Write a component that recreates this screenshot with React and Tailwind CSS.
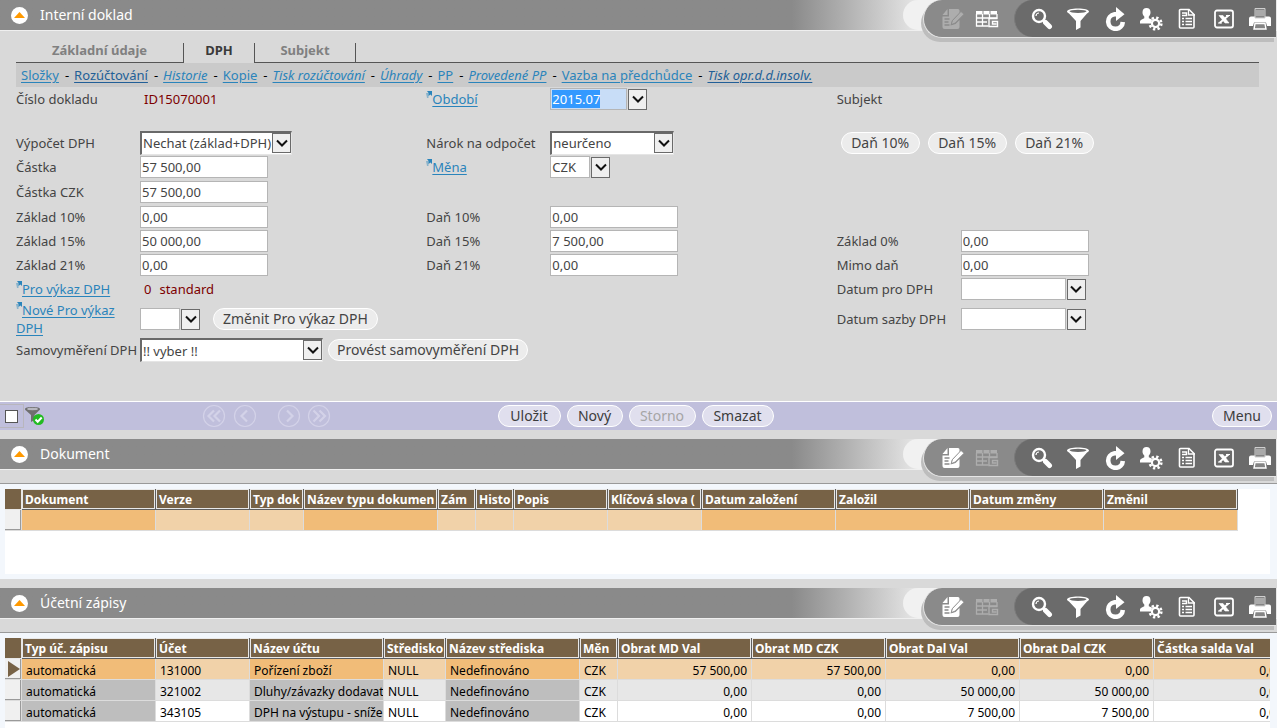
import { useEffect, useRef } from "react";

const documentColumns = [
  { title: "Dokument", width: 134, dark: true },
  { title: "Verze", width: 94 },
  { title: "Typ dok", width: 54 },
  { title: "Název typu dokumen", width: 134, dark: true },
  { title: "Zám", width: 38 },
  { title: "Histo", width: 38 },
  { title: "Popis", width: 94 },
  { title: "Klíčová slova (", width: 94 },
  { title: "Datum založení", width: 134, dark: true },
  { title: "Založil", width: 134, dark: true },
  { title: "Datum změny", width: 134, dark: true },
  { title: "Změnil", width: 134, dark: true },
];

const entryColumns = [
  { title: "Typ úč. zápisu", width: 134, dark: true },
  { title: "Účet", width: 94 },
  { title: "Název účtu", width: 134, dark: true },
  { title: "Středisko", width: 62 },
  { title: "Název střediska", width: 134, dark: true },
  { title: "Měn", width: 38 },
  { title: "Obrat MD Val", width: 134, right: true },
  { title: "Obrat MD CZK", width: 134, right: true },
  { title: "Obrat Dal Val", width: 134, right: true },
  { title: "Obrat Dal CZK", width: 134, right: true },
  { title: "Částka salda Val", width: 134, right: true },
];

const entries = [
  ["automatická", "131000", "Pořízení zboží", "NULL", "Nedefinováno", "CZK", "57 500,00", "57 500,00", "0,00", "0,00", "0,00"],
  ["automatická", "321002", "Dluhy/závazky dodavat", "NULL", "Nedefinováno", "CZK", "0,00", "0,00", "50 000,00", "50 000,00", "0,00"],
  ["automatická", "343105", "DPH na výstupu - sníže", "NULL", "Nedefinováno", "CZK", "0,00", "0,00", "7 500,00", "7 500,00", "0,00"],
];

const links = [
  { text: "Složky" },
  { text: "Rozúčtování", visited: true },
  { text: "Historie", italic: true },
  { text: "Kopie" },
  { text: "Tisk rozúčtování", italic: true },
  { text: "Úhrady", italic: true },
  { text: "PP" },
  { text: "Provedené PP", italic: true },
  { text: "Vazba na předchůdce" },
  { text: "Tisk opr.d.d.insolv.", italic: true, visited: true },
];

/* ---------- icons ---------- */

function EditIcon() {
  return (
    <svg viewBox="0 0 22 22" width="22" height="22" fill="currentColor">
      <path d="M7 1h9a1.500 1.500 0 0 1 1.500 1.500V5L10 12.500l-1.500 5L13.500 16l4-4v7a2 2 0 0 1-2 2h-13a2 2 0 0 1-2-2V8.500H7z" />
      <path d="M5.500 1v6H.5z" />
      <path d="M2.500 11h5M2.500 14h4M2.500 17h5" stroke="#8a8a8a" strokeWidth="1.300" />
      <path d="M19 3.500l3 2.700-8.800 8.800-4 1.500 1.300-4z" stroke="#8a8a8a" strokeWidth=".8" />
    </svg>
  );
}

function GridIcon() {
  return (
    <svg viewBox="0 0 24 18" width="24" height="18" fill="none" stroke="currentColor">
      <path d="M1 1h6.500v3.500H1zM8.500 1h6v3.500h-6zM15.500 1h6.500v3.500h-6.500z" fill="currentColor" stroke="none" />
      <path d="M1.500 4v12h12M1 8h21.500M1 12h11M7.500 4v12M14.500 4v4M22 4v4" strokeWidth="1.300" />
      <path d="M22.500 8.500H14v8h8.500v-5h-5v2.500h4" strokeWidth="1.400" />
    </svg>
  );
}

function SearchIcon() {
  return (
    <svg viewBox="0 0 22 22" width="22" height="22" fill="none" stroke="currentColor">
      <circle cx="8" cy="8" r="6" strokeWidth="2.400" />
      <path d="M5 8a3 3 0 0 1 3-3" strokeWidth="1.200" />
      <path d="M12.500 12.500l1.500 1.500" strokeWidth="2.500" />
      <path d="M14.500 14.500l4 4" strokeWidth="5" strokeLinecap="round" />
    </svg>
  );
}

function FilterIcon() {
  return (
    <svg viewBox="0 0 22 22" width="22" height="22" fill="currentColor">
      <path d="M0 3.500C0 1.800 5 .5 11 .5s11 1.300 11 3c0 .8-.8 1.500-2 2L13.500 13v6.500L9 22v-9L2 5.500c-1.200-.5-2-1.200-2-2z" />
      <ellipse cx="11" cy="3.300" rx="8.500" ry="1.600" fill="#6b6b6b" />
    </svg>
  );
}

function RefreshIcon() {
  return (
    <svg viewBox="0 0 22 24" width="22" height="24">
      <path d="M13 7.300h-2.500a7.300 7.300 0 1 0 8.300 7.700" fill="none" stroke="currentColor" strokeWidth="4.600" />
      <path d="M12 0l8.500 7.300L12 14z" fill="currentColor" />
    </svg>
  );
}

function UserGearIcon() {
  return (
    <svg viewBox="0 0 24 24" width="24" height="24">
      <path d="M7.500 1c2.600 0 4 1.600 4 4.200 0 2-.8 3.400-1.700 4.400v1.600l3.500 1.600-1.800 3.700H1v-1.800c0-1.200.6-1.800 1.800-2.300l2.500-1.200V9.600c-1-1-1.800-2.400-1.800-4.400C3.500 2.600 5 1 7.500 1z" fill="currentColor" />
      <circle cx="16.500" cy="16.500" r="5.800" fill="none" stroke="currentColor" strokeWidth="2.600" strokeDasharray="2.300 2.255" />
      <circle cx="16.500" cy="16.500" r="3.600" fill="#6b6b6b" stroke="currentColor" strokeWidth="2.200" />
    </svg>
  );
}

function ReportIcon() {
  return (
    <svg viewBox="0 0 18 22" width="18" height="22" fill="none" stroke="currentColor">
      <path d="M2.500 1.500H11l5 5v12.500a1 1 0 0 1-1 1h-12.500a1 1 0 0 1-1-1V2.500a1 1 0 0 1 1-1z" strokeWidth="1.600" />
      <path d="M10.500 1v6H17" strokeWidth="1.300" />
      <path d="M4 5h4.500v2.500H4M4 10.500h2M4 13.500h2M4 16.500h2M7.500 10.500H14M7.500 13.500H14M7.500 16.500H14" strokeWidth="1.500" />
    </svg>
  );
}

function ExcelIcon() {
  return (
    <svg viewBox="0 0 20 20" width="20" height="20" fill="none" stroke="currentColor">
      <rect x="1" y="1.500" width="18" height="17" rx="2" strokeWidth="1.800" />
      <path d="M5 6.500h4l6 7.500h-4z" fill="currentColor" strokeWidth=".6" />
      <path d="M14.500 6.500L5.500 14" strokeWidth="1.800" />
      <path d="M12 6.500h4M4 14h4" strokeWidth="1.200" />
    </svg>
  );
}

function PrinterIcon() {
  return (
    <svg viewBox="0 0 22 22" width="22" height="22">
      <path d="M2 8.500h18a2 2 0 0 1 2 2V18h-4l-1-3.500H5L4 18H0v-7.500a2 2 0 0 1 2-2z" fill="currentColor" />
      <path d="M6 .5h10v9.500H6z" fill="#858585" stroke="#cfcfcf" strokeWidth="1" />
      <path d="M7 3h8M7 5h8M7 7h8" stroke="#cfcfcf" strokeWidth="1" />
      <path d="M6 15.500h10l1 5.500H5z" fill="#858585" stroke="currentColor" strokeWidth="1.400" />
    </svg>
  );
}

function ChevronDown() {
  return (
    <svg viewBox="0 0 12 8" width="12" height="8" fill="none" stroke="#111" strokeWidth="2">
      <path d="M1 1.500l5 5 5-5" />
    </svg>
  );
}

function FilterOkIcon() {
  return (
    <svg viewBox="0 0 20 20" width="20" height="20">
      <path d="M0 3C0 1.700 3 1 7.500 1S15 1.700 15 3c0 .7-.4 1.200-1 1.500L9.500 9v5L6 16V9L1 4.500C.4 4.200 0 3.700 0 3z" fill="#6f6f6f" />
      <ellipse cx="7.500" cy="3" rx="5.500" ry="1.200" fill="#b8b8c0" />
      <circle cx="13.500" cy="13.500" r="5.500" fill="#22bb22" />
      <path d="M10.500 13.500l2.200 2.200 4-4.200" fill="none" stroke="#fff" strokeWidth="2" />
    </svg>
  );
}

function NavIcon({ d }) {
  return (
    <svg viewBox="0 0 24 24" width="24" height="24" fill="none" stroke="#d3d2e8">
      <circle cx="12" cy="12" r="10.500" strokeWidth="1.200" />
      <path d={d} strokeWidth="2.200" />
    </svg>
  );
}

/* ---------- small controls ---------- */

function PillButton({ children, tone = "bg-[#ececec]", className = "", ...rest }) {
  return (
    <button
      className={`h-[22px] rounded-full border border-white text-sm leading-[20px] whitespace-nowrap ${tone} ${className}`}
      {...rest}
    >
      {children}
    </button>
  );
}

function RefLink({ children }) {
  return (
    <a href="#" className="inline-block leading-[18px] text-[#2a84bb] underline underline-offset-2">
      <svg viewBox="0 0 6 8" width="6" height="8" className="inline-block align-super">
        <path d="M1 0h5v5L4.500 3.500 2.500 5V2z" fill="#2a84bb" />
        <path d="M0 2h2.500v5H1z" fill="#2a84bb" opacity=".45" />
      </svg>
      {children}
    </a>
  );
}

function Field({ id, label, children }) {
  return (
    <div className="flex min-w-0 items-center">
      <label htmlFor={id} className="w-[124px] shrink-0 whitespace-nowrap">
        {label}
      </label>
      {children}
    </div>
  );
}

function TextBox({ className = "w-32", ...rest }) {
  return (
    <input
      type="text"
      className={`h-[22px] border border-[#b5b5b5] bg-white px-px outline-none ${className}`}
      {...rest}
    />
  );
}

function Combo({ id, width, label, value = "" }) {
  return (
    <div className="flex items-center gap-px">
      <TextBox id={id} className={width} defaultValue={value} />
      <ArrowButton label={label} />
    </div>
  );
}

function ArrowButton({ label }) {
  return (
    <button
      aria-label={label}
      className="flex h-[21px] w-[19px] items-center justify-center border border-[#6a6a6a] bg-[#efefef]"
    >
      <ChevronDown />
    </button>
  );
}

function SelectBox({ id, value, className }) {
  return (
    <div className={`relative ${className}`}>
      <select
        id={id}
        className="block h-6 w-full appearance-none border-t-2 border-r border-b border-l-2 border-t-[#696969] border-r-[#e5e5e5] border-b-[#e5e5e5] border-l-[#696969] bg-white pl-px outline-none"
      >
        <option>{value}</option>
      </select>
      <span className="pointer-events-none absolute top-0.5 right-px flex h-5 w-[19px] items-center justify-center border border-[#6a6a6a] bg-[#efefef]">
        <ChevronDown />
      </span>
    </div>
  );
}

function PeriodBox() {
  const ref = useRef(null);

  useEffect(() => {
    ref.current.focus();
    ref.current.select();
  }, []);

  return (
    <div className="flex items-center gap-px">
      <input
        id="obdobi"
        ref={ref}
        type="text"
        defaultValue="2015.07"
        className="h-[22px] w-[77px] border border-[#b5b5b5] bg-[#c8ddf7] px-px outline-none selection:bg-[#3399ff] selection:text-white"
      />
      <ArrowButton label="Vybrat období" />
    </div>
  );
}

/* ---------- panels ---------- */

function ToolButton({ label, className = "w-6", children }) {
  return (
    <button aria-label={label} className={`flex h-full items-center justify-center ${className}`}>
      {children}
    </button>
  );
}

function PanelHeader({ title, editable }) {
  const dim = "w-[34px] text-[#adadad]";
  const lit = "w-[34px] text-white";

  return (
    <header className="relative flex h-[31px] shrink-0 items-center border-b border-[#efefef] bg-linear-to-r from-[#8a8a8a] from-62% to-[#e8e8e8] to-72% pl-[11px] text-white">
      <button aria-label="Sbalit" className="flex size-[17px] items-center justify-center rounded-full bg-white">
        <svg viewBox="0 0 11 6" width="11" height="6">
          <path d="M5.500 0L11 6H0z" fill="#f90" />
        </svg>
      </button>
      <h2 className="ml-3 text-sm">{title}</h2>

      {/* toolbar hangs below the title strip */}
      <div className="absolute top-0 right-0 flex pr-px">
        <div className="-mr-5 h-[30px] w-10 rounded-l-full bg-[#f1f1f1]" />
        <div className="relative flex h-[38px] rounded-l-[20px] border-b border-l border-[#e6e6e6] bg-[#8a8a8a] pl-3 shadow-[-2px_4px_0_#bdbdbd]">
          <ToolButton label="Upravit" className={editable ? lit : dim}><EditIcon /></ToolButton>
          <ToolButton label="Tabulka" className={editable ? dim : lit}><GridIcon /></ToolButton>
          <div className="ml-2.5 flex w-[262px] justify-between rounded-l-[20px] border-l border-[#7b7b7b] bg-[#6b6b6b] pr-1 pl-[15px]">
            <ToolButton label="Hledat"><SearchIcon /></ToolButton>
            <ToolButton label="Filtr"><FilterIcon /></ToolButton>
            <ToolButton label="Obnovit"><RefreshIcon /></ToolButton>
            <ToolButton label="Nastavení uživatele"><UserGearIcon /></ToolButton>
            <ToolButton label="Sestava"><ReportIcon /></ToolButton>
            <ToolButton label="Export do Excelu"><ExcelIcon /></ToolButton>
            <ToolButton label="Tisk"><PrinterIcon /></ToolButton>
          </div>
        </div>
      </div>
    </header>
  );
}

function rowColor(index, dark) {
  if (index === 0) return dark ? "bg-[#f1bc78]" : "bg-[#f1d2a9]";
  if (dark) return "bg-[#bebebe]";
  return index % 2 ? "bg-[#e7e7e7]" : "bg-white";
}

function DataGrid({ columns, rows, current }) {
  const total = columns.reduce((sum, c) => sum + c.width, 17);

  return (
    <table className="table-fixed border-separate border-spacing-0 text-xs text-black" style={{ width: total }}>
      <colgroup>
        <col style={{ width: 17 }} />
        {columns.map((c) => (
          <col key={c.title} style={{ width: c.width }} />
        ))}
      </colgroup>
      <thead>
        <tr className="h-[21px]">
          <th className="border-r border-b border-[#e8e8e8] bg-[#776246] p-0" />
          {columns.map((c) => (
            <th
              key={c.title}
              className="overflow-hidden border-r border-b border-[#5f5f5f] bg-[#776246] p-0 text-left font-bold whitespace-nowrap text-white"
            >
              <div className="h-5 overflow-hidden border border-[#e8e8e8] pl-0.5 leading-[19px]">{c.title}</div>
            </th>
          ))}
        </tr>
      </thead>
      <tbody>
        {rows.map((row, i) => (
          <tr key={i} className="h-[21px]">
            <td className="border-r border-b border-[#dcdcdc] p-0">
              <div className="flex h-5 items-center justify-end border-r border-b border-[#9a9a9a] bg-[#f0f0f0]">
                {current === i && (
                  <svg viewBox="0 0 12 16" width="12" height="16">
                    <path d="M0 0l12 8-12 8z" fill="#776246" />
                  </svg>
                )}
              </div>
            </td>
            {columns.map((c, j) => (
              <td
                key={c.title}
                className={`overflow-hidden border-r border-b border-[#dcdcdc] px-1 pt-1 pb-0 leading-4 whitespace-nowrap ${rowColor(i, c.dark)} ${c.right ? "text-right" : ""}`}
              >
                {row[j]}
              </td>
            ))}
          </tr>
        ))}
      </tbody>
    </table>
  );
}

function Tab({ active, className, children }) {
  return (
    <button
      role="tab"
      aria-selected={active}
      className={`border-r border-[#555] pb-1.5 leading-3 font-bold ${active ? "text-[#3a3a3a]" : "border-b text-[#808080]"} ${className}`}
    >
      {children}
    </button>
  );
}

function DocumentForm() {
  const row = "grid grid-cols-3 items-center";

  return (
    <div className="flex flex-col text-[#444]">
      <div className="mt-3 mr-[18px] ml-4 flex h-5" role="tablist">
        <Tab className="w-[168px]">Základní údaje</Tab>
        <Tab active className="w-[71px]">DPH</Tab>
        <Tab className="w-[101px]">Subjekt</Tab>
        <div className="flex-1 border-b border-[#555]" />
      </div>
      <nav className="mr-[18px] ml-4 flex h-6 items-center gap-1.5 bg-[#cacaca] pl-[5px] whitespace-nowrap text-black">
        {links.map((link, i) => (
          <span key={link.text} className="flex gap-[5px]">
            {i > 0 && <span>-</span>}
            <a
              href="#"
              className={`underline underline-offset-2 ${link.italic ? "italic" : ""} ${link.visited ? "text-[#225f97]" : "text-[#2a84bb]"}`}
            >
              {link.text}
            </a>
          </span>
        ))}
      </nav>

      <div className="pr-[30px] pl-4">
        <div className={`${row} h-6`}>
          <Field label="Číslo dokladu">
            <output className="pl-1 text-[#7d0000]">ID15070001</output>
          </Field>
          <Field id="obdobi" label={<RefLink>Období</RefLink>}>
            <PeriodBox />
          </Field>
          <span>Subjekt</span>
        </div>
        <div className={`${row} mt-[19px] h-[25px]`}>
          <Field id="vypocet" label="Výpočet DPH">
            <SelectBox id="vypocet" value="Nechat (základ+DPH)" className="w-[152px]" />
          </Field>
          <Field id="narok" label="Nárok na odpočet">
            <SelectBox id="narok" value="neurčeno" className="w-[124px]" />
          </Field>
          <div className="flex gap-2 pl-1">
            <PillButton className="w-[79px]">Daň 10%</PillButton>
            <PillButton className="w-[79px]">Daň 15%</PillButton>
            <PillButton className="w-[79px]">Daň 21%</PillButton>
          </div>
        </div>
        <div className={`${row} h-6`}>
          <Field id="castka" label="Částka">
            <TextBox id="castka" defaultValue="57 500,00" />
          </Field>
          <Field id="mena" label={<RefLink>Měna</RefLink>}>
            <Combo id="mena" width="w-10" label="Vybrat měnu" value="CZK" />
          </Field>
        </div>
        <div className={`${row} h-[25px]`}>
          <Field id="castka-czk" label="Částka CZK">
            <TextBox id="castka-czk" defaultValue="57 500,00" />
          </Field>
        </div>
        <div className={`${row} h-[25px]`}>
          <Field id="zaklad10" label="Základ 10%">
            <TextBox id="zaklad10" defaultValue="0,00" />
          </Field>
          <Field id="dan10" label="Daň 10%">
            <TextBox id="dan10" defaultValue="0,00" />
          </Field>
        </div>
        <div className={`${row} h-6`}>
          <Field id="zaklad15" label="Základ 15%">
            <TextBox id="zaklad15" defaultValue="50 000,00" />
          </Field>
          <Field id="dan15" label="Daň 15%">
            <TextBox id="dan15" defaultValue="7 500,00" />
          </Field>
          <Field id="zaklad0" label="Základ 0%">
            <TextBox id="zaklad0" defaultValue="0,00" />
          </Field>
        </div>
        <div className={`${row} h-6`}>
          <Field id="zaklad21" label="Základ 21%">
            <TextBox id="zaklad21" defaultValue="0,00" />
          </Field>
          <Field id="dan21" label="Daň 21%">
            <TextBox id="dan21" defaultValue="0,00" />
          </Field>
          <Field id="mimo-dan" label="Mimo daň">
            <TextBox id="mimo-dan" defaultValue="0,00" />
          </Field>
        </div>
        <div className={`${row} h-6`}>
          <Field label={<RefLink>Pro výkaz DPH</RefLink>}>
            <output className="flex gap-2 pl-1 text-[#7d0000]">
              <span>0</span>
              <span>standard</span>
            </output>
          </Field>
          <span />
          <Field id="datum-pro" label="Datum pro DPH">
            <Combo id="datum-pro" width="w-[105px]" label="Vybrat datum pro DPH" />
          </Field>
        </div>
        <div className={`${row} h-9`}>
          <Field
            id="novy-vykaz"
            label={<RefLink>Nové Pro výkaz<br />DPH</RefLink>}
          >
            <Combo id="novy-vykaz" width="w-10" label="Vybrat výkaz" />
            <PillButton className="ml-[13px] px-[9px]">Změnit Pro výkaz DPH</PillButton>
          </Field>
          <span />
          <Field id="datum-sazby" label="Datum sazby DPH">
            <Combo id="datum-sazby" width="w-[105px]" label="Vybrat datum sazby DPH" />
          </Field>
        </div>
        <div className={`${row} h-[26px]`}>
          <Field id="samovymereni" label="Samovyměření DPH">
            <SelectBox id="samovymereni" value="!! vyber !!" className="w-[183px] shrink-0" />
            <PillButton className="ml-[5px] px-2">Provést samovyměření DPH</PillButton>
          </Field>
        </div>
      </div>
    </div>
  );
}

function ActionBar() {
  const tone = "bg-[#e0dfee]";

  return (
    <div className="mt-[38px] mb-[9px] grid h-[29px] shrink-0 grid-cols-[1fr_auto_1fr] items-center border-t border-white bg-[#c0bfdc] text-[#3c3c3c]">
      <div className="flex items-center">
        <label className="flex h-6 w-6 items-center justify-center border-y border-r border-[#b8b6bd]">
          <input
            type="checkbox"
            aria-label="Označit záznam"
            className="size-[13px] appearance-none border border-[#555] bg-white"
          />
        </label>
        <button aria-label="Aktivní filtr" className="ml-px"><FilterOkIcon /></button>
        <div className="ml-[157px] flex gap-5">
          <div className="flex gap-[7px]">
            <button aria-label="První" disabled><NavIcon d="M12 6.500L6.500 12l5.500 5.500M18 6.500L12.500 12l5.500 5.500" /></button>
            <button aria-label="Předchozí" disabled><NavIcon d="M14 6.500L8.500 12l5.500 5.500" /></button>
          </div>
          <div className="flex gap-1.5">
            <button aria-label="Další" disabled><NavIcon d="M10 6.500l5.500 5.500-5.500 5.500" /></button>
            <button aria-label="Poslední" disabled><NavIcon d="M6.500 6.500L12 12l-5.500 5.500M12.500 6.500L18 12l-5.500 5.500" /></button>
          </div>
        </div>
      </div>
      <div className="flex gap-1.5 pr-1.5">
        <PillButton tone={tone} className="w-[63px]">Uložit</PillButton>
        <PillButton tone={tone} className="w-14">Nový</PillButton>
        <PillButton tone={tone} className="w-[67px] text-[#a5a5a5]" disabled>Storno</PillButton>
        <PillButton tone={tone} className="w-[72px]">Smazat</PillButton>
      </div>
      <div className="flex justify-end pr-[5px]">
        <PillButton tone={tone} className="w-[60px]">Menu</PillButton>
      </div>
    </div>
  );
}

export default function App() {
  return (
    <div className="flex min-h-screen flex-col bg-[#d9d9d9] font-['Noto_Sans',sans-serif] text-[13px] leading-[18px]">
      <PanelHeader title="Interní doklad" />
      <DocumentForm />
      <ActionBar />

      <PanelHeader title="Dokument" editable />
      <section className="mt-[13px] mb-[9px] h-24 shrink-0 border-t border-[#999] bg-[#f3f7fc] pt-[5px] pr-[7px] pb-[5px] pl-[5px]">
        <div className="h-full overflow-hidden bg-white">
          <DataGrid columns={documentColumns} rows={[[]]} />
        </div>
      </section>

      <PanelHeader title="Účetní zápisy" editable />
      <section className="mt-[13px] flex flex-1 flex-col border-t border-[#999] bg-[#f3f7fc] pt-[5px] pr-[7px] pl-[5px]">
        <div className="flex-1 overflow-hidden bg-white">
          <DataGrid columns={entryColumns} rows={entries} current={0} />
        </div>
      </section>
    </div>
  );
}
